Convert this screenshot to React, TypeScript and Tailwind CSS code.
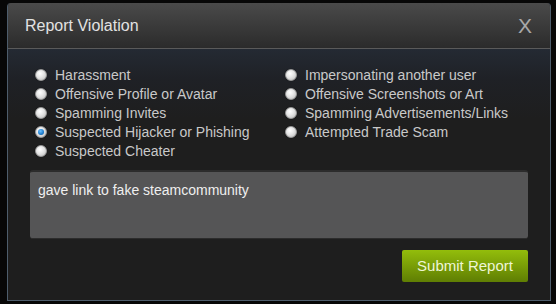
import React from "react";

const left = [
  "Harassment",
  "Offensive Profile or Avatar",
  "Spamming Invites",
  "Suspected Hijacker or Phishing",
  "Suspected Cheater",
];
const right = [
  "Impersonating another user",
  "Offensive Screenshots or Art",
  "Spamming Advertisements/Links",
  "Attempted Trade Scam",
];

function Radio({ checked }: { checked?: boolean }) {
  return (
    <span className="relative flex h-[12px] w-[12px] shrink-0 items-center justify-center rounded-full border border-[#9a9a9a] bg-[radial-gradient(circle_at_40%_35%,#ffffff_0%,#e4e4e4_45%,#b8b8b8_100%)] shadow-[0_0_1px_rgba(0,0,0,0.6)]">
      {checked && (
        <span className="h-[6px] w-[6px] rounded-full bg-[radial-gradient(circle_at_40%_35%,#6fc2ff_0%,#1f7fd0_55%,#0d4f8f_100%)]" />
      )}
    </span>
  );
}

function Item({ label, checked }: { label: string; checked?: boolean }) {
  return (
    <div className="flex h-[19px] items-center gap-[8px]">
      <Radio checked={checked} />
      <span className="text-[14px] leading-none text-[#c9c9c9]">{label}</span>
    </div>
  );
}

export default function App() {
  return (
    <div
      className="h-[304px] w-[556px] bg-[#070707] pl-[7px] pt-[3px]"
      style={{ fontFamily: '"Liberation Sans", Arial, sans-serif' }}
    >
      <div className="flex h-[298px] w-[544px] flex-col overflow-hidden rounded-t-[4px] border border-t-0 border-[#4e5d6c] bg-[#1e1e1e]">
        <div className="flex h-[46px] shrink-0 items-center justify-between border-b border-[#5a5a5a] bg-[linear-gradient(to_bottom,#4a4a4a,#2b2b2b)] pl-[17px] pr-[18px]">
          <span className="text-[16px] text-[#e2e2e2]">Report Violation</span>
          <span className="text-[21px] leading-none text-[#a8a8a8]">X</span>
        </div>
        <div className="flex flex-1 flex-col bg-[linear-gradient(to_bottom,#242a33_0px,#1f2126_30px,#1e1e1e_70px)] pl-[22px] pr-[21px] pt-[16px]">
          <div className="flex pl-[5px]">
            <div className="w-[250px]">
              {left.map((l, i) => (
                <Item key={l} label={l} checked={i === 3} />
              ))}
            </div>
            <div>
              {right.map((l) => (
                <Item key={l} label={l} />
              ))}
            </div>
          </div>
          <div className="mt-[10px] h-[69px] w-[498px] rounded-[3px] border-t-2 border-b border-[#2c2c2c] bg-[#555556] px-[8px] pt-[8px] text-[14px] text-[#efefef]">
            gave link to fake steamcommunity
          </div>
          <div className="mt-[11px] flex justify-end pr-[1px]">
            <button className="h-[32px] w-[126px] rounded-[2px] bg-[linear-gradient(to_bottom,#93bd0b,#5f7e03)] text-[15px] text-[#eef6d6]">
              Submit Report
            </button>
          </div>
        </div>
      </div>
    </div>
  );
}
